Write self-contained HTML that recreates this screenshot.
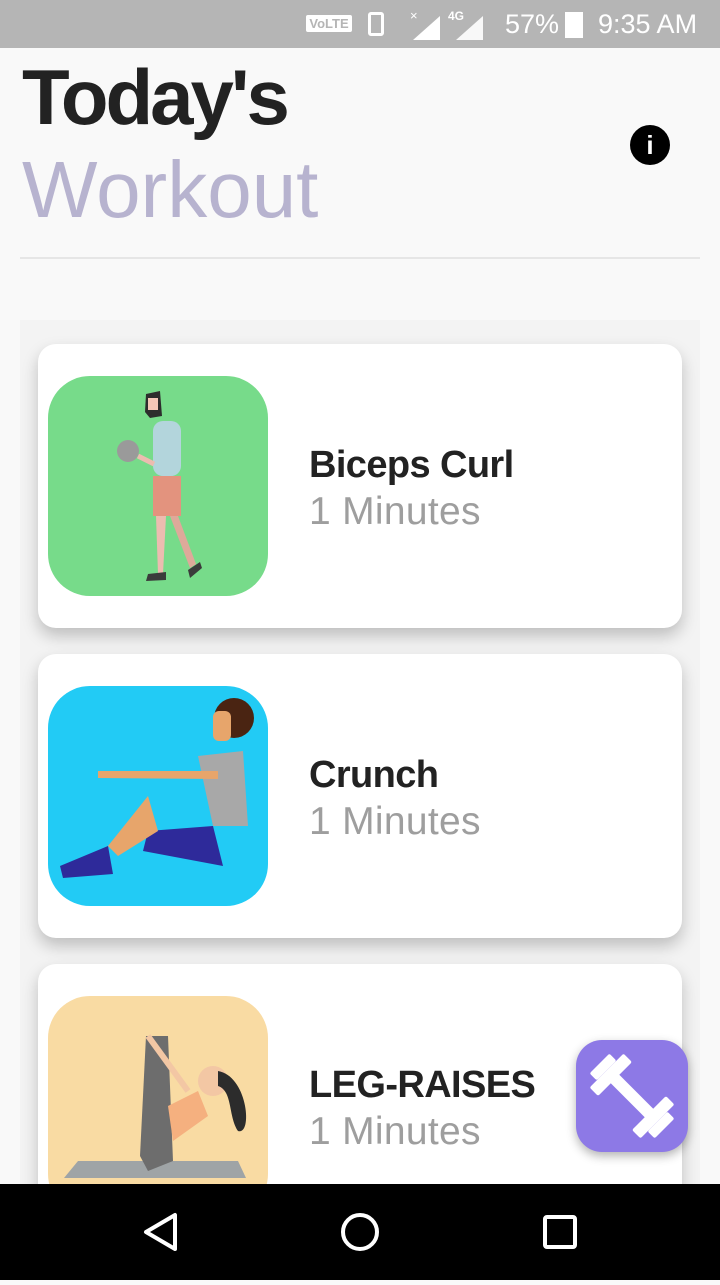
<!DOCTYPE html><html><head><style>
*{margin:0;padding:0;box-sizing:border-box}
body{width:720px;height:1280px;background:#f9f9f9;font-family:"Liberation Sans",Roboto,sans-serif;position:relative;overflow:hidden}
.sb{position:absolute;top:0;left:0;width:720px;height:48px;background:#b5b5b5;color:#fff;font-size:27px}
.card{position:absolute;left:38px;width:644px;height:284px;background:#fff;border-radius:18px;box-shadow:0 8px 16px rgba(0,0,0,.22)}
.img{position:absolute;left:10px;top:32px;width:220px;height:220px;border-radius:42px;overflow:hidden}
.t{position:absolute;left:271px;top:100px;font-size:38px;font-weight:bold;color:#222;letter-spacing:-0.6px}
.s{position:absolute;left:271px;top:146px;font-size:39px;color:#9e9e9e;letter-spacing:0.3px}
</style></head><body>
<div class="sb">
<div style="position:absolute;left:306px;top:15px;width:46px;height:17px;background:#fff;color:#b5b5b5;font-size:13px;font-weight:bold;text-align:center;line-height:17px;border-radius:2px">VoLTE</div>
<div style="position:absolute;left:368px;top:12px;width:16px;height:24px;border:3px solid #fff;border-radius:3px"></div>
<svg style="position:absolute;left:408px;top:8px" width="80" height="34"><path d="M5 32 L32 8 L32 32Z" fill="#fff"/><text x="2" y="12" font-size="13" fill="#fff">×</text><path d="M48 32 L75 8 L75 32Z" fill="#fff" opacity=".9"/><text x="40" y="12" font-size="12" font-weight="bold" fill="#fff">4G</text></svg>
<div style="position:absolute;left:505px;top:9px">57%</div>
<div style="position:absolute;left:565px;top:12px;width:18px;height:26px;background:#fff"></div>
<div style="position:absolute;left:598px;top:9px">9:35 AM</div>
</div>
<div style="position:absolute;left:22px;top:52px;font-size:78px;font-weight:bold;color:#222;letter-spacing:-3px">Today's</div>
<div style="position:absolute;left:22px;top:144px;font-size:80px;color:#b7b3cf">Workout</div>
<div style="position:absolute;left:630px;top:125px;width:40px;height:40px;border-radius:50%;background:#000;color:#fff;font-weight:bold;font-size:26px;text-align:center;line-height:40px">i</div>
<div style="position:absolute;left:20px;top:257px;width:680px;height:2px;background:#e6e6e6"></div>
<div style="position:absolute;left:20px;top:320px;width:680px;height:870px;background:#f3f3f3"></div>

<div class="card" style="top:344px"><div class="img" style="background:#77db8a">
<svg width="220" height="220"><rect x="105" y="45" width="28" height="55" rx="10" fill="#b3d5dc"/><rect x="105" y="100" width="28" height="40" fill="#e3937e"/><path d="M108 140 L118 140 L115 198 L110 198Z" fill="#ecbcb0"/><path d="M122 140 L130 140 L148 188 L142 192Z" fill="#dea99a"/><path d="M100 198 L118 196 L118 204 L98 205Z M140 194 L152 186 L154 192 L142 202Z" fill="#3b3b3b"/><circle cx="80" cy="75" r="11" fill="#9a9a9a"/><path d="M90 80 L106 88" stroke="#ecbcb0" stroke-width="5"/><path d="M98 18 L112 15 L114 40 L102 42 L97 36Z" fill="#2d2d2d"/><rect x="100" y="22" width="10" height="12" fill="#f4c7b7"/></svg></div>
<div class="t">Biceps Curl</div><div class="s">1 Minutes</div></div>

<div class="card" style="top:654px"><div class="img" style="background:#22cbf5">
<svg width="220" height="220"><circle cx="186" cy="32" r="20" fill="#4a2412"/><rect x="165" y="25" width="18" height="30" rx="6" fill="#e7a56b"/><path d="M150 70 L195 65 L200 140 L165 140Z" fill="#a8a8a8"/><path d="M50 85 L170 85 L170 93 L50 92Z" fill="#e7a56b"/><path d="M100 145 L165 140 L175 180 L95 165Z" fill="#2e2a9a"/><path d="M100 110 L110 145 L70 170 L60 160Z" fill="#e7a56b"/><path d="M12 180 L60 160 L65 188 L15 192Z" fill="#2e2a9a"/></svg></div>
<div class="t">Crunch</div><div class="s">1 Minutes</div></div>

<div class="card" style="top:964px"><div class="img" style="background:#f9dba3">
<svg width="220" height="220"><path d="M30 165 L190 165 L198 182 L16 182Z" fill="#9fa4a6"/><path d="M98 40 L120 40 L125 165 L100 175 L92 160Z" fill="#6d6d6d"/><circle cx="165" cy="85" r="15" fill="#f3c7a4"/><path d="M170 75 C200 80 205 140 190 135 C180 120 185 95 170 90Z" fill="#2c2c2c"/><path d="M120 110 L150 95 L160 120 L125 145Z" fill="#f5b07f"/><path d="M100 40 L140 95" stroke="#f3c7a4" stroke-width="6"/></svg></div>
<div class="t">LEG-RAISES</div><div class="s">1 Minutes</div></div>

<div style="position:absolute;left:576px;top:1040px;width:112px;height:112px;border-radius:26px;background:#8d79e6;box-shadow:0 4px 10px rgba(0,0,0,.3)">
<svg width="112" height="112" viewBox="0 0 112 112"><g fill="#fff" transform="rotate(45 56 56)"><rect x="26" y="50" width="60" height="12"/><rect x="20" y="32" width="12" height="48" rx="2"/><rect x="80" y="32" width="12" height="48" rx="2"/><rect x="10" y="42" width="10" height="28" rx="2"/><rect x="92" y="42" width="10" height="28" rx="2"/></g></svg></div>

<div style="position:absolute;left:0;top:1184px;width:720px;height:96px;background:#000">
<svg width="720" height="96"><path d="M175 31 L175 65 L146 48Z" fill="none" stroke="#fff" stroke-width="4" stroke-linejoin="round"/><circle cx="360" cy="48" r="17" fill="none" stroke="#fff" stroke-width="4"/><rect x="545" y="33" width="30" height="30" rx="2" fill="none" stroke="#fff" stroke-width="4"/></svg></div>
</body></html>
